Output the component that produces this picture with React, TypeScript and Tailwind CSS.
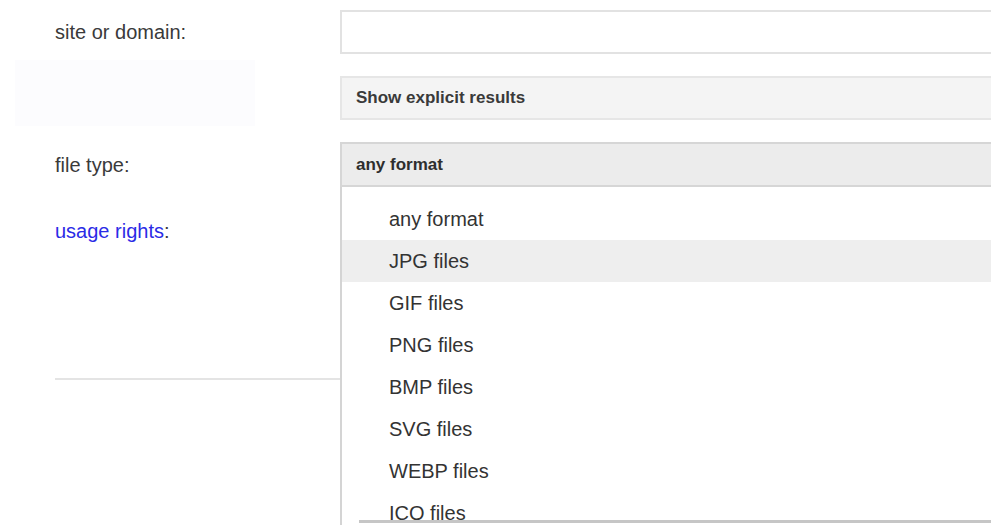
import { useState } from "react";

const fileTypes = [
  "any format",
  "JPG files",
  "GIF files",
  "PNG files",
  "BMP files",
  "SVG files",
  "WEBP files",
  "ICO files",
];

export default function App() {
  const [site, setSite] = useState("");
  const [hovered, setHovered] = useState(1);

  return (
    <div className="relative h-[525px] w-full overflow-hidden bg-white font-['Liberation_Sans',Arial,sans-serif] text-[#333]">
      {/* faint panel behind the safesearch row */}
      <div className="absolute left-[15px] top-[60px] h-[66px] w-[240px] bg-[#fcfcfe]" />

      <div className="relative grid grid-cols-[340px_700px] pt-[10px]">
        {/* site or domain */}
        <div className="flex h-[44px] items-center pl-[55px] text-[20px] text-[#3a3a3a]">
          site or domain:
        </div>
        <input
          value={site}
          onChange={(e) => setSite(e.target.value)}
          className="h-[44px] border-2 border-[#e2e2e2] bg-white px-3 outline-none"
        />

        {/* safesearch */}
        <div className="mt-[22px] h-[44px]" />
        <button className="mt-[22px] flex h-[44px] items-center border-2 border-[#e6e6e6] bg-[#f4f4f4] pl-[14px] text-left text-[17px] font-bold text-[#3a3a3a]">
          Show explicit results
        </button>

        {/* file type */}
        <div className="mt-[22px] flex h-[45px] items-center pl-[55px] text-[20px] text-[#3a3a3a]">
          file type:
        </div>
        <div className="relative mt-[22px] h-[45px]">
          <div className="flex h-full items-center border-2 border-[#d6d6d6] bg-[#ececec] pl-[14px] text-[17px] font-bold text-[#2e2e2e]">
            any format
          </div>

          <div className="absolute left-0 top-full z-10 h-[400px] w-full border-l-2 border-[#d4d4d4] bg-white pt-[11px]">
            {fileTypes.map((t, i) => (
              <div
                key={t}
                onMouseEnter={() => setHovered(i)}
                className={
                  "flex h-[42px] items-center pl-[47px] text-[20px] text-[#333] " +
                  (hovered === i ? "bg-[#eeeeee]" : "bg-white")
                }
              >
                {t}
              </div>
            ))}
            <div className="absolute left-[17px] right-0 top-[333px] h-[3px] bg-[#c6c6c6]" />
          </div>
        </div>

        {/* usage rights */}
        <div className="mt-[29px] pl-[55px] text-[20px] text-[#3a3a3a]">
          <span className="text-[#2b2be6]">usage rights</span>:
        </div>
        <div />
      </div>

      <div className="ml-[55px] mt-[132px] h-[2px] w-[285px] bg-[#e4e4e4]" />
    </div>
  );
}
